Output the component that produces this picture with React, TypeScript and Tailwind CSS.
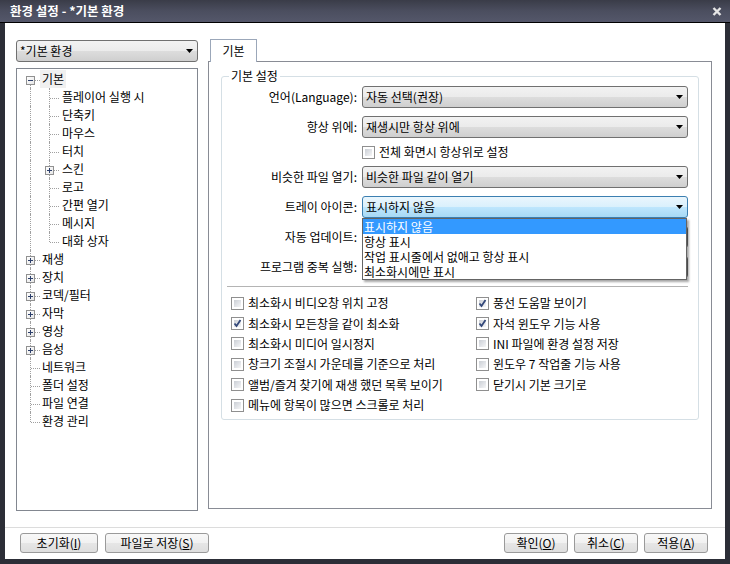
import React from 'react';

const FONT = "font-['Noto_Sans_CJK_KR','Noto_Sans',sans-serif]";

function Arrow() {
  return (
    <svg width="7" height="4" viewBox="0 0 7 4" className="shrink-0">
      <path d="M0 0H7L3.5 4Z" fill="#000" />
    </svg>
  );
}

function Select({ value, focused }: { value: string; focused?: boolean }) {
  return (
    <div
      className={`flex h-[22px] flex-1 items-center justify-between rounded-[3px] border pl-[3px] pr-[4px] ${
        focused
          ? 'border-[#3c7fb1] bg-[linear-gradient(to_bottom,#eaf6fd_0%,#d9f0fc_50%,#bee6fd_50%,#a7d9f5_100%)]'
          : 'border-[#707070] bg-[linear-gradient(to_bottom,#f2f2f2_0%,#ebebeb_50%,#dddddd_50%,#cfcfcf_100%)]'
      }`}
    >
      <span className="whitespace-nowrap">{value}</span>
      <Arrow />
    </div>
  );
}

function CheckBox({ checked }: { checked?: boolean }) {
  return (
    <div className="relative h-[13px] w-[13px] shrink-0 border border-[#8f8f8f] bg-white">
      <div className="absolute inset-[2px] bg-[linear-gradient(135deg,#cbcfd5_0%,#e4e6ea_60%,#f6f6f6_100%)]" />
      {checked && (
        <svg width="11" height="11" viewBox="0 0 11 11" className="absolute left-0 top-0">
          <path d="M2.5 5.5L4.5 8L8.5 2" stroke="#34497a" strokeWidth="1.8" fill="none" />
        </svg>
      )}
    </div>
  );
}

function Check({ label, checked }: { label: string; checked?: boolean }) {
  return (
    <div className="flex h-[20.4px] items-center">
      <CheckBox checked={checked} />
      <span className="ml-[4px] whitespace-nowrap">{label}</span>
    </div>
  );
}

function TreeBox({ plus }: { plus?: boolean }) {
  return (
    <div className="absolute top-[6px] h-[9px] w-[9px] border border-[#919191] bg-[linear-gradient(135deg,#ffffff_0%,#e6e6e6_100%)]">
      <div className="absolute left-[1px] top-[3px] h-[1px] w-[5px] bg-[#2c3f6b]" />
      {plus && <div className="absolute left-[3px] top-[1px] h-[5px] w-[1px] bg-[#2c3f6b]" />}
    </div>
  );
}

type V = 'full' | 'top' | 'bottom' | 'none';

function VLine({ v, left }: { v: V; left: string }) {
  if (v === 'none') return null;
  const pos = v === 'full' ? 'top-0 bottom-0' : v === 'top' ? 'top-0 h-[10px]' : 'top-[10px] bottom-0';
  return <div className={`absolute ${left} ${pos} w-0 border-l border-dotted border-[#a0a0a0]`} />;
}

type Item = { label: string; level: 0 | 1; box?: 'plus' | 'minus'; selected?: boolean };

const items: Item[] = [
  { label: '기본', level: 0, box: 'minus', selected: true },
  { label: '플레이어 실행 시', level: 1 },
  { label: '단축키', level: 1 },
  { label: '마우스', level: 1 },
  { label: '터치', level: 1 },
  { label: '스킨', level: 1, box: 'plus' },
  { label: '로고', level: 1 },
  { label: '간편 열기', level: 1 },
  { label: '메시지', level: 1 },
  { label: '대화 상자', level: 1 },
  { label: '재생', level: 0, box: 'plus' },
  { label: '장치', level: 0, box: 'plus' },
  { label: '코덱/필터', level: 0, box: 'plus' },
  { label: '자막', level: 0, box: 'plus' },
  { label: '영상', level: 0, box: 'plus' },
  { label: '음성', level: 0, box: 'plus' },
  { label: '네트워크', level: 0 },
  { label: '폴더 설정', level: 0 },
  { label: '파일 연결', level: 0 },
  { label: '환경 관리', level: 0 },
];

function TreeRow({ item, index }: { item: Item; index: number }) {
  const last0 = index === items.length - 1;
  const first0 = index === 0;
  const lastChild = item.level === 1 && (items[index + 1]?.level ?? 0) === 0;
  let v0: V = 'full';
  if (item.level === 0) v0 = first0 ? 'bottom' : last0 ? 'top' : 'full';
  return (
    <div className="flex h-[18px] items-stretch">
      <div className="relative w-[23px] shrink-0">
        <VLine v={v0} left="left-[13px]" />
        {item.level === 0 && (
          <>
            <div className="absolute left-[14px] top-[10px] w-[9px] border-t border-dotted border-[#a0a0a0]" />
            {item.box && (
              <div className="absolute left-[9px] top-0">
                <TreeBox plus={item.box === 'plus'} />
              </div>
            )}
          </>
        )}
      </div>
      {item.level === 1 && (
        <div className="relative w-[20px] shrink-0">
          <VLine v={lastChild ? 'top' : 'full'} left="left-[9px]" />
          <div className="absolute left-[10px] top-[10px] w-[9px] border-t border-dotted border-[#a0a0a0]" />
          {item.box && (
            <div className="absolute left-[5px] top-0">
              <TreeBox plus />
            </div>
          )}
        </div>
      )}
      <div className={`flex items-center whitespace-nowrap px-[2px] leading-[18px] ${item.selected ? 'bg-[#f0f0f0]' : ''}`}>
        {item.label}
      </div>
    </div>
  );
}

function Button({ w, children }: { w: string; children: React.ReactNode }) {
  return (
    <div
      className={`flex h-[20px] ${w} items-center justify-center rounded-[3px] border border-[#9a9a9a] bg-[linear-gradient(to_bottom,#f8f8f8_0%,#f1f1f1_50%,#e6e6e6_50%,#dedede_100%)]`}
    >
      {children}
    </div>
  );
}

function FormRow({ label, children, className = '' }: { label: string; children: React.ReactNode; className?: string }) {
  return (
    <div className={`flex h-[22px] items-center ${className}`}>
      <div className="w-[135px] shrink-0 whitespace-nowrap text-right">{label}</div>
      <div className="ml-[5px] flex flex-1">{children}</div>
    </div>
  );
}

export default function App() {
  return (
    <div className={`${FONT} flex h-[564px] w-[730px] flex-col bg-[#2c2e37] text-[12px] leading-[16px] text-black`}>
      {/* Title bar */}
      <div className="flex h-[23px] shrink-0 items-center justify-between border-b border-black bg-[linear-gradient(to_bottom,#3a3c48_0%,#4b4e5f_50%,#54576a_100%)] pl-[10px] pr-[8px]">
        <span className="text-[12.5px] font-bold text-white">환경 설정 - *기본 환경</span>
        <svg width="10" height="9" viewBox="0 0 10 9">
          <path d="M1.5 1L8.5 8M8.5 1L1.5 8" stroke="#e6e6e6" strokeWidth="2.4" />
        </svg>
      </div>

      {/* Body */}
      <div className="mx-[5px] flex h-[536px] flex-col bg-white">
        <div className="flex h-[504px] shrink-0">
          {/* Left column */}
          <div className="ml-[11px] mt-[17px] flex w-[182px] flex-col">
            <div className="flex h-[22px] items-center justify-between rounded-[3px] border border-[#707070] bg-[linear-gradient(to_bottom,#f2f2f2_0%,#ebebeb_50%,#dddddd_50%,#cfcfcf_100%)] pl-[3px] pr-[4px]">
              <span>*기본 환경</span>
              <Arrow />
            </div>
            <div className="mt-[6px] h-[443px] border border-[#828790] pt-[1px]">
              {items.map((it, i) => (
                <TreeRow key={i} item={it} index={i} />
              ))}
            </div>
          </div>

          {/* Right column */}
          <div className="ml-[10px] mt-[16px] flex w-[504px] flex-col">
            <div className="relative z-10 -mb-px ml-[2px] flex h-[23px] w-[47px] items-center justify-center border border-b-0 border-[#9ba7b9] bg-white">
              기본
            </div>
            <div className="h-[448px] border border-[#898c95] px-[12px] pt-[6px]">
              <fieldset className="rounded-[3px] border border-[#d5dfe5] pb-[4px] pr-[10px]">
                <legend className="ml-[7px] px-[2px] leading-[16px]">기본 설정</legend>
                <FormRow label="언어(Language):" className="mt-[2px]">
                  <Select value="자동 선택(권장)" />
                </FormRow>
                <FormRow label="항상 위에:" className="mt-[8px]">
                  <Select value="재생시만 항상 위에" />
                </FormRow>
                <div className="flex h-[28px] items-center pl-[140px]">
                  <CheckBox />
                  <span className="ml-[4px]">전체 화면시 항상위로 설정</span>
                </div>
                <FormRow label="비슷한 파일 열기:">
                  <Select value="비슷한 파일 같이 열기" />
                </FormRow>
                <FormRow label="트레이 아이콘:" className="relative z-20 mt-[8px]">
                  <div className="relative flex flex-1">
                    <Select value="표시하지 않음" focused />
                    <div className="absolute left-0 right-[1px] top-full border border-[#646464] bg-white shadow-[2px_2px_2px_rgba(0,0,0,0.35)]">
                      <div className="h-[15px] bg-[#3399ff] pl-[1px] leading-[15px] text-white">표시하지 않음</div>
                      <div className="h-[15px] pl-[1px] leading-[15px]">항상 표시</div>
                      <div className="h-[15px] pl-[1px] leading-[15px]">작업 표시줄에서 없애고 항상 표시</div>
                      <div className="h-[15px] pl-[1px] leading-[15px]">최소화시에만 표시</div>
                    </div>
                  </div>
                </FormRow>
                <FormRow label="자동 업데이트:" className="mt-[8px]">
                  <Select value="" />
                </FormRow>
                <FormRow label="프로그램 중복 실행:" className="mt-[8px]">
                  <Select value="" />
                </FormRow>
                <div className="ml-[5px] mt-[8px] border-t border-[#b4b4b4]" />
                <div className="mt-[6px] flex pl-[9px]">
                  <div className="flex w-[245px] flex-col">
                    <Check label="최소화시 비디오창 위치 고정" />
                    <Check label="최소화시 모든창을 같이 최소화" checked />
                    <Check label="최소화시 미디어 일시정지" />
                    <Check label="창크기 조절시 가운데를 기준으로 처리" />
                    <Check label="앨범/즐겨 찾기에 재생 했던 목록 보이기" />
                    <Check label="메뉴에 항목이 많으면 스크롤로 처리" />
                  </div>
                  <div className="flex flex-col">
                    <Check label="풍선 도움말 보이기" checked />
                    <Check label="자석 윈도우 기능 사용" checked />
                    <Check label="INI 파일에 환경 설정 저장" />
                    <Check label="윈도우 7 작업줄 기능 사용" />
                    <Check label="닫기시 기본 크기로" />
                  </div>
                </div>
              </fieldset>
            </div>
          </div>
        </div>

        {/* Footer */}
        <div className="flex h-[32px] shrink-0 items-start border-t border-[#dcdcdc] pl-[15px] pr-[17px] pt-[5px]">
          <div className="flex gap-[7px]">
            <Button w="w-[78px]">
              <span>
                초기화(<u>I</u>)
              </span>
            </Button>
            <Button w="w-[104px]">
              <span>
                파일로 저장(<u>S</u>)
              </span>
            </Button>
          </div>
          <div className="ml-auto flex gap-[6px]">
            <Button w="w-[64px]">
              <span>
                확인(<u>O</u>)
              </span>
            </Button>
            <Button w="w-[64px]">
              <span>
                취소(<u>C</u>)
              </span>
            </Button>
            <Button w="w-[64px]">
              <span>
                적용(<u>A</u>)
              </span>
            </Button>
          </div>
        </div>
      </div>
      <div className="h-[5px] shrink-0" />
    </div>
  );
}
